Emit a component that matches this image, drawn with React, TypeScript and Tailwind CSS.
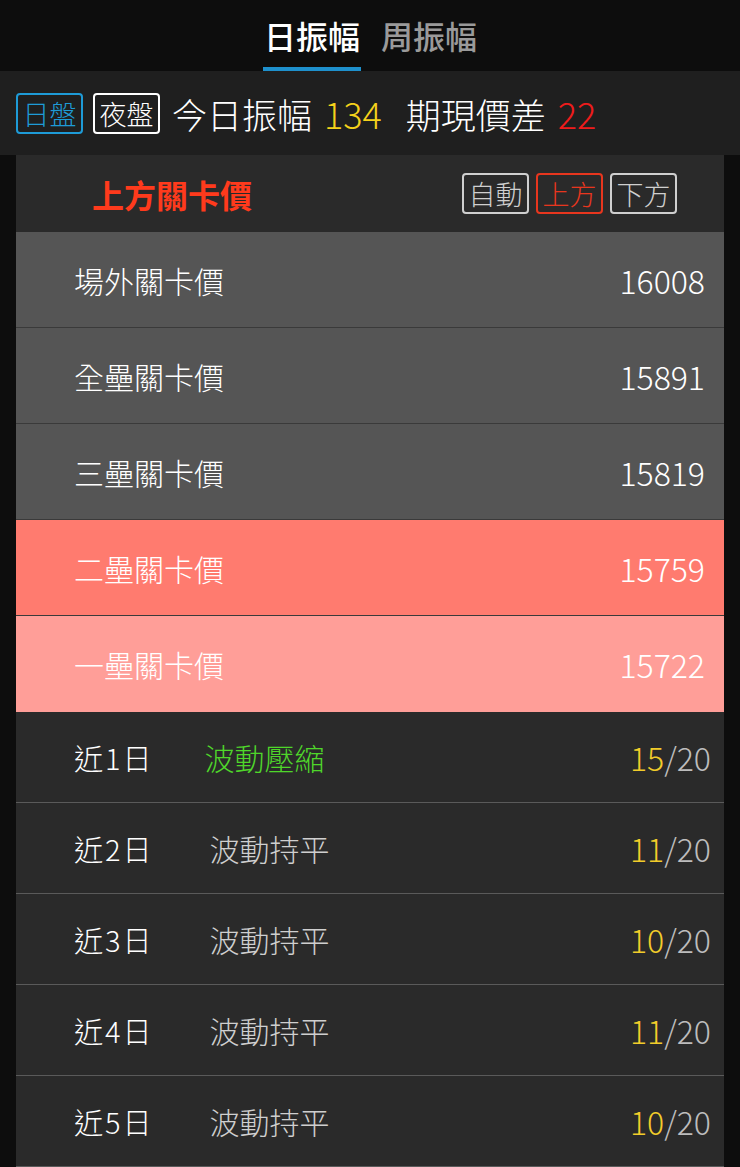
import React from "react";

const FONT = { fontFamily: '"Noto Sans CJK TC", "Noto Sans", sans-serif' };

type Level = { name: string; value: string; bg: string };

const levels: Level[] = [
  { name: "場外關卡價", value: "16008", bg: "bg-[#555555]" },
  { name: "全壘關卡價", value: "15891", bg: "bg-[#555555]" },
  { name: "三壘關卡價", value: "15819", bg: "bg-[#555555]" },
  { name: "二壘關卡價", value: "15759", bg: "bg-[#ff7b6f]" },
  { name: "一壘關卡價", value: "15722", bg: "bg-[#ff9e98]" },
];

type Recent = { day: string; label: string; hot: boolean; score: string };

const recents: Recent[] = [
  { day: "近1日", label: "波動壓縮", hot: true, score: "15" },
  { day: "近2日", label: "波動持平", hot: false, score: "11" },
  { day: "近3日", label: "波動持平", hot: false, score: "10" },
  { day: "近4日", label: "波動持平", hot: false, score: "11" },
  { day: "近5日", label: "波動持平", hot: false, score: "10" },
];

function Chip({ label, tone }: { label: string; tone: "blue" | "white" | "red" | "gray" }) {
  const cls =
    tone === "blue"
      ? "border-[#1e9bd7] text-[#1e9bd7]"
      : tone === "white"
        ? "border-white text-white"
        : tone === "red"
          ? "border-[#e8361e] text-[#e8361e]"
          : "border-[#cfcfcf] text-[#cfcfcf]";
  return (
    <span
      className={`flex h-[41px] w-[67px] items-center justify-center rounded-[4px] border-2 text-[27px] font-light leading-none ${cls}`}
    >
      {label}
    </span>
  );
}

export default function App() {
  return (
    <div className="min-h-[1167px] w-[740px] bg-[#0d0d0d] text-white" style={FONT}>
      {/* tabs */}
      <div className="flex h-[71px] items-end justify-center gap-[18px] bg-[#0d0d0d]">
        <div className="flex flex-col items-center">
          <span className="px-[2px] pb-[16px] text-[32px] font-medium leading-none text-white">日振幅</span>
          <span className="h-[4px] w-[98px] bg-[#1e90cc]" />
        </div>
        <div className="flex flex-col items-center">
          <span className="pb-[16px] text-[32px] font-medium leading-none text-[#9a9a9a]">周振幅</span>
          <span className="h-[4px] w-[98px]" />
        </div>
      </div>

      {/* summary bar */}
      <div className="flex h-[84px] items-center bg-[#1f1f1f] pl-[16px]">
        <div className="flex gap-[10px]">
          <Chip label="日盤" tone="blue" />
          <Chip label="夜盤" tone="white" />
        </div>
        <span className="ml-[12px] text-[35px] font-light leading-none text-white">今日振幅</span>
        <span className="ml-[12px] text-[36px] font-light leading-none text-[#f5d21b]">134</span>
        <span className="ml-[24px] text-[35px] font-light leading-none text-white">期現價差</span>
        <span className="ml-[12px] text-[36px] font-light leading-none text-[#ee1c1c]">22</span>
      </div>

      {/* card */}
      <div className="mx-[16px] bg-[#2a2a2a]">
        <div className="flex h-[77px] items-center justify-between pl-[76px] pr-[47px]">
          <span className="text-[32px] font-bold leading-none text-[#ff3a1c]">上方關卡價</span>
          <div className="flex gap-[7px]">
            <Chip label="自動" tone="gray" />
            <Chip label="上方" tone="red" />
            <Chip label="下方" tone="gray" />
          </div>
        </div>

        {levels.map((l, i) => (
          <div
            key={l.name}
            className={`flex h-[96px] items-center justify-between pl-[58px] pr-[19px] ${l.bg} ${
              i < levels.length - 1 ? "border-b border-[#3a3a3a]" : ""
            }`}
          >
            <span className="text-[30px] font-light leading-none text-white">{l.name}</span>
            <span className="text-[32px] font-light leading-none text-white">{l.value}</span>
          </div>
        ))}

        {recents.map((r) => (
          <div
            key={r.day}
            className="flex h-[91px] items-center border-b border-[#5a5a5a] pl-[58px] pr-[13px]"
          >
            <span className="text-[29px] font-light leading-none tracking-[2px] text-white">{r.day}</span>
            <span
              className={`text-[30px] font-light leading-none ${
                r.hot ? "ml-[51px] text-[#4fd62a]" : "ml-[56px] text-[#cfcfcf]"
              }`}
            >
              {r.label}
            </span>
            <span className="ml-auto text-[32px] font-light leading-none">
              <span className="text-[#f2cc2a]">{r.score}</span>
              <span className="text-[#bdbdbd]">/20</span>
            </span>
          </div>
        ))}
      </div>
    </div>
  );
}
